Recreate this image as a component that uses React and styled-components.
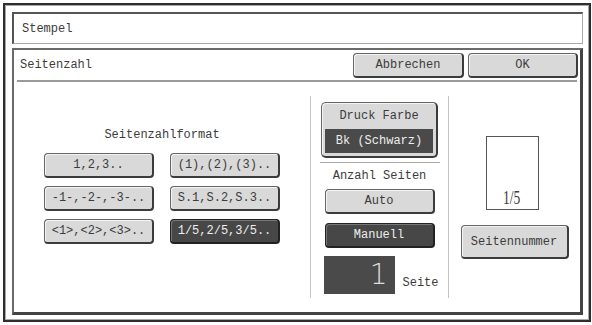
import React from 'react'
import styled, { createGlobalStyle, css } from 'styled-components'

const Global = createGlobalStyle`
    body {
        margin: 0;
        background: #fff;
        font-family: "Liberation Mono", "DejaVu Sans Mono", monospace;
        font-size: 12px;
        color: #3c3c3c;
    }
`

const Frame = styled.div`
    box-sizing: border-box;
    width: 588px;
    height: 319px;
    margin: 3px;
    border: 2px solid #2e2e2e;
    box-shadow: inset 0 0 0 1px #a8a8a8;
    padding: 7px 6px 5px 7px;
    display: flex;
    flex-direction: column;
    gap: 4px;
`

const TitleBox = styled.div`
    box-sizing: border-box;
    height: 32px;
    border-top: 2px solid #555;
    border-left: 2px solid #555;
    border-right: 1px solid #aaa;
    border-bottom: 1px solid #aaa;
    display: flex;
    align-items: center;
    padding-left: 8px;
`

const Panel = styled.div`
    box-sizing: border-box;
    flex: 1;
    border-top: 2px solid #6a6a6a;
    border-left: 2px solid #6a6a6a;
    border-right: 3px solid #444;
    border-bottom: 3px solid #444;
    display: flex;
    flex-direction: column;
`

const Header = styled.div`
    height: 30px;
    box-sizing: border-box;
    padding: 3px 2px 0 6px;
    display: flex;
    align-items: flex-start;
    gap: 4px;
`

const HeaderTitle = styled.span`
    flex: 1;
    line-height: 25px;
`

const Rule = styled.div`
    height: 2px;
    margin: 0 3px;
    background: #9a9a9a;
`

const Button = styled.div`
    box-sizing: border-box;
    width: ${p => p.$w}px;
    height: ${p => p.$h || 25}px;
    border: 1px solid #666;
    border-right: 2px solid #3c3c3c;
    border-bottom: 2px solid #3c3c3c;
    border-radius: 4px;
    background: #d9d9d9;
    box-shadow: inset 1px 1px 0 #f4f4f4;
    display: flex;
    align-items: center;
    justify-content: center;
    white-space: nowrap;
    color: #3c3c3c;
    ${p => p.$active && css`
        background: #474747;
        color: #eee;
        border-color: #222;
        box-shadow: inset 1px 1px 0 #777;
    `}
`

const Body = styled.div`
    flex: 1;
    display: flex;
`

const FormatArea = styled.div`
    width: 296px;
    padding-top: 46px;
    display: flex;
    flex-direction: column;
    align-items: center;
`

const Label = styled.div`
    line-height: 14px;
    text-align: center;
`

const FormatGrid = styled.div`
    margin-top: 11px;
    display: grid;
    grid-template-columns: 110px 110px;
    column-gap: 16px;
    row-gap: 8px;
`

const Middle = styled.div`
    box-sizing: border-box;
    width: 139px;
    height: 202px;
    margin-top: 14px;
    border-left: 1px solid #c4c4c4;
    border-right: 1px solid #c4c4c4;
    padding-top: 6px;
    display: flex;
    flex-direction: column;
    align-items: center;
`

const ColorBox = styled.div`
    box-sizing: border-box;
    width: 117px;
    height: 56px;
    border: 1px solid #666;
    border-right: 2px solid #3c3c3c;
    border-bottom: 2px solid #3c3c3c;
    border-radius: 5px;
    background: #d9d9d9;
    box-shadow: inset 1px 1px 0 #f4f4f4;
    padding: 0 3px 3px 3px;
    display: flex;
    flex-direction: column;
`

const ColorLabel = styled.div`
    height: 26px;
    display: flex;
    align-items: center;
    justify-content: center;
`

const ColorValue = styled.div`
    height: 24px;
    background: #4a4a4a;
    color: #eee;
    display: flex;
    align-items: center;
    justify-content: center;
`

const ShortRule = styled.div`
    width: 120px;
    height: 1px;
    margin-top: 4px;
    background: #aaa;
`

const CountLabel = styled(Label)`
    margin-top: 6px;
    margin-bottom: 6px;
`

const Stack = styled.div`
    display: flex;
    flex-direction: column;
    gap: 9px;
`

const CountRow = styled.div`
    margin-top: 8px;
    width: 115px;
    padding-left: 3px;
    display: flex;
    align-items: flex-end;
    gap: 7px;
`

const CountDisplay = styled.div`
    box-sizing: border-box;
    width: 72px;
    height: 38px;
    background: #4a4a4a;
    color: #ddd;
    font-family: "DejaVu Sans", "Liberation Sans", sans-serif;
    font-weight: 200;
    font-size: 28px;
    line-height: 38px;
    text-align: right;
    padding-right: 8px;
`

const Unit = styled.span`
    line-height: 14px;
    padding-bottom: 4px;
`

const RightArea = styled.div`
    flex: 1;
    padding-top: 54px;
    display: flex;
    flex-direction: column;
    align-items: center;
`

const Preview = styled.div`
    box-sizing: border-box;
    width: 53px;
    height: 74px;
    margin-right: 5px;
    border: 1px solid #555;
    display: flex;
    align-items: flex-end;
    justify-content: center;
    padding-bottom: 1px;
    font-family: "Liberation Serif", serif;
    font-size: 18px;
    line-height: 20px;
`

const PreviewText = styled.span`
    display: inline-block;
    transform: scaleX(0.75);
`

const NumberButton = styled(Button)`
    margin-top: 15px;
`

const formats = [
    '1,2,3..',
    '(1),(2),(3)..',
    '-1-,-2-,-3-..',
    'S.1,S.2,S.3..',
    '<1>,<2>,<3>..',
    '1/5,2/5,3/5..',
]

export default function App() {
    const selected = '1/5,2/5,3/5..'

    return (
        <>
            <Global />
            <Frame>
                <TitleBox>Stempel</TitleBox>
                <Panel>
                    <Header>
                        <HeaderTitle>Seitenzahl</HeaderTitle>
                        <Button $w={111}>Abbrechen</Button>
                        <Button $w={110}>OK</Button>
                    </Header>
                    <Rule />
                    <Body>
                        <FormatArea>
                            <Label>Seitenzahlformat</Label>
                            <FormatGrid>
                                {formats.map(f => (
                                    <Button key={f} $w={110} $active={f === selected}>{f}</Button>
                                ))}
                            </FormatGrid>
                        </FormatArea>
                        <Middle>
                            <ColorBox>
                                <ColorLabel>Druck Farbe</ColorLabel>
                                <ColorValue>Bk (Schwarz)</ColorValue>
                            </ColorBox>
                            <ShortRule />
                            <CountLabel>Anzahl Seiten</CountLabel>
                            <Stack>
                                <Button $w={110}>Auto</Button>
                                <Button $w={110} $active>Manuell</Button>
                            </Stack>
                            <CountRow>
                                <CountDisplay>1</CountDisplay>
                                <Unit>Seite</Unit>
                            </CountRow>
                        </Middle>
                        <RightArea>
                            <Preview><PreviewText>1/5</PreviewText></Preview>
                            <NumberButton $w={108} $h={34}>Seitennummer</NumberButton>
                        </RightArea>
                    </Body>
                </Panel>
            </Frame>
        </>
    )
}
